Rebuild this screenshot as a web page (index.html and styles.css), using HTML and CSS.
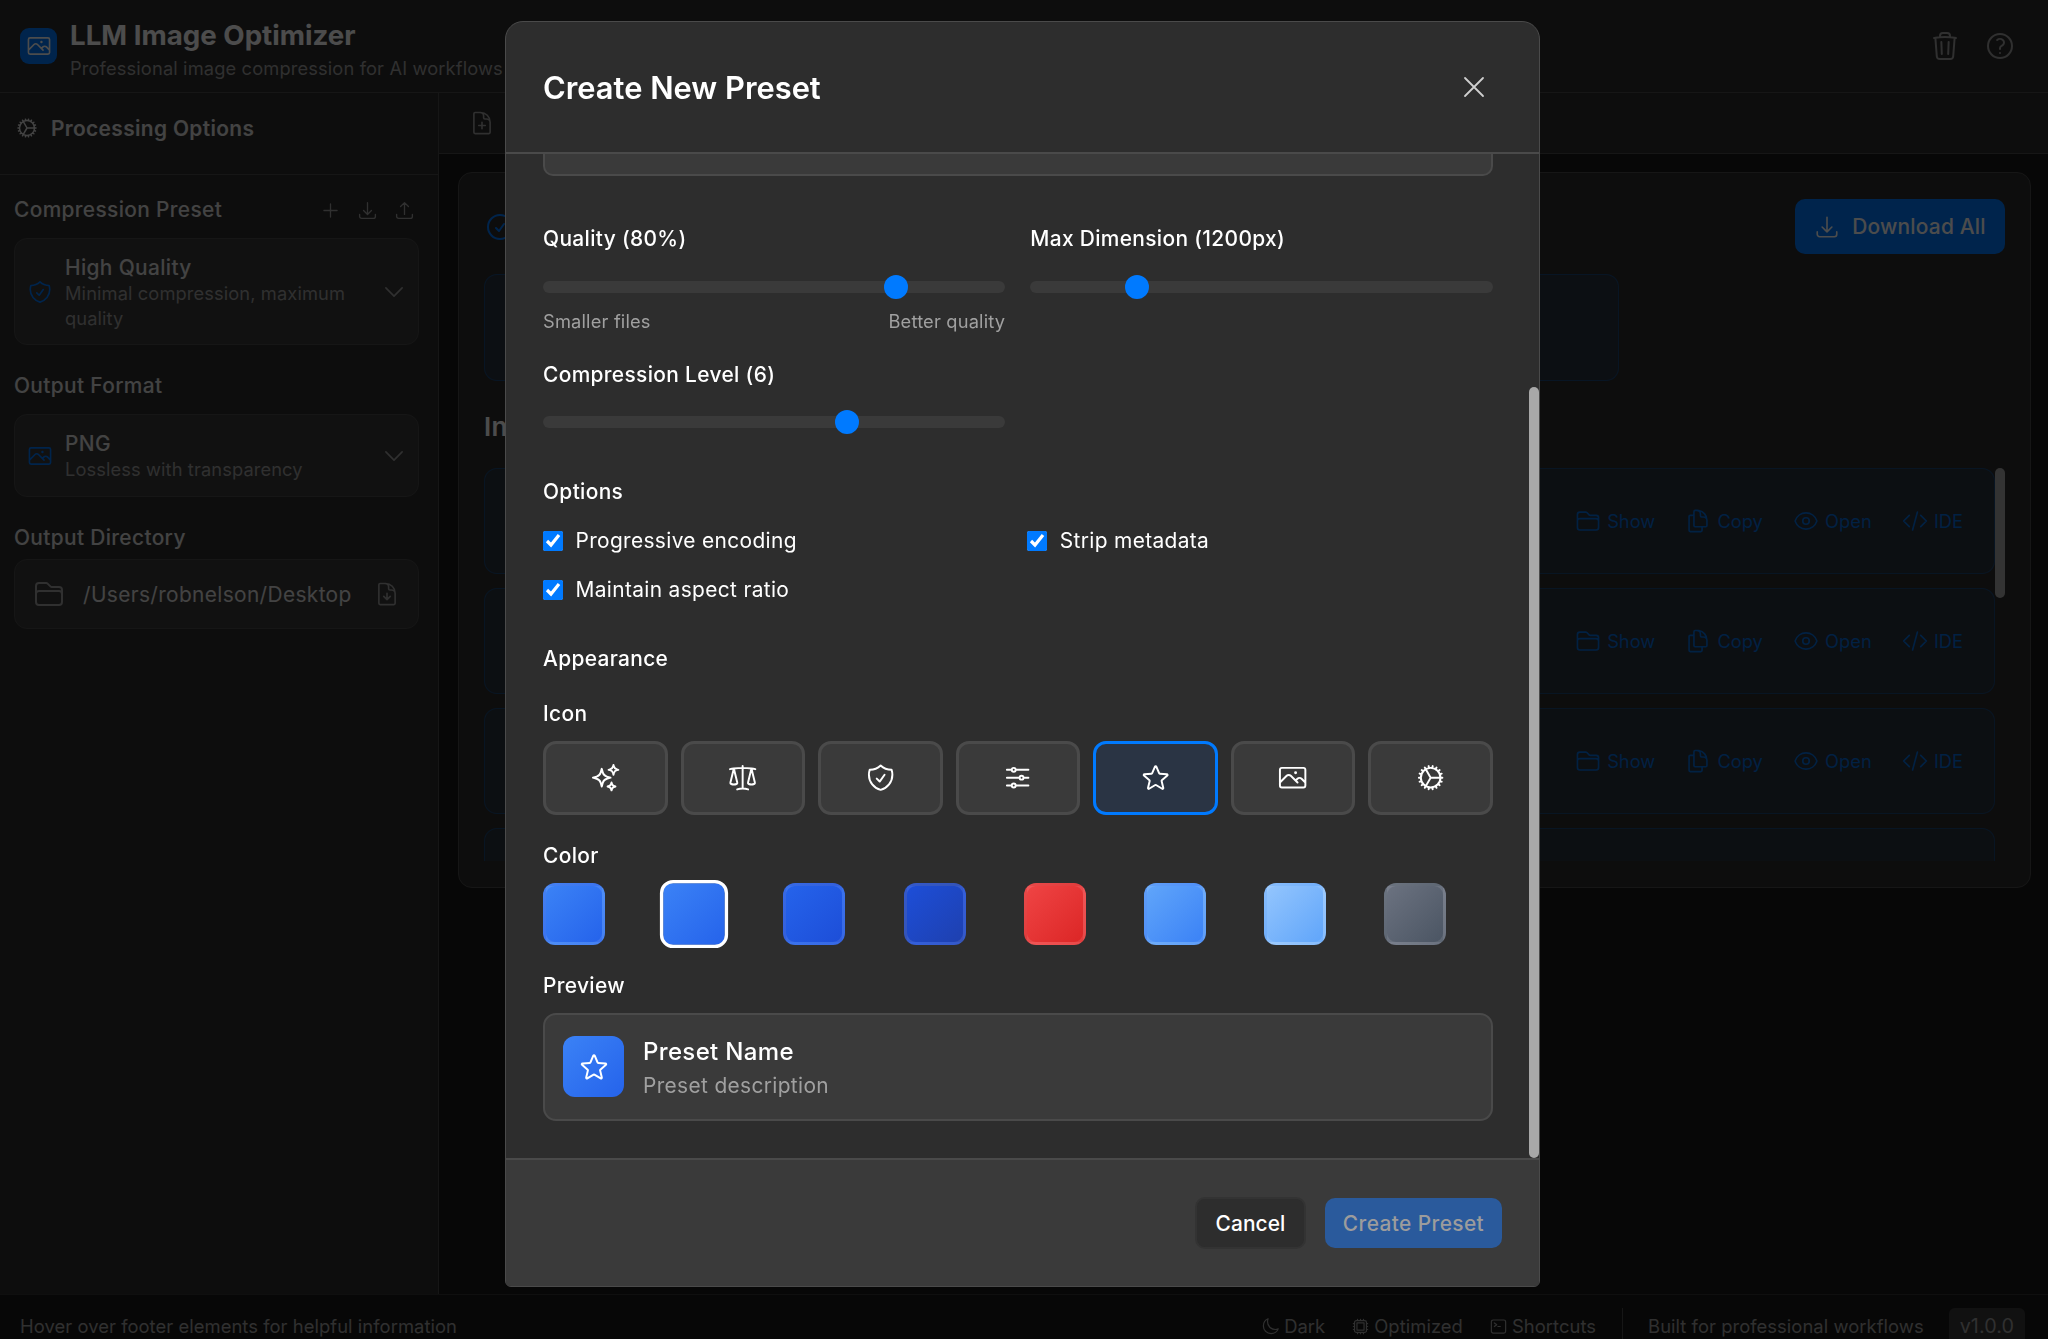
FILE: index.html
```html
<!DOCTYPE html>
<html lang="en">
<head>
<meta charset="utf-8">
<title>LLM Image Optimizer</title>
<link rel="stylesheet" href="styles.css">
</head>
<body>
<svg class="defs" aria-hidden="true">
  <symbol id="sparkles" viewBox="0 0 24 24"><path d="M9.813 15.904 9 18.75l-.813-2.846a4.5 4.5 0 0 0-3.09-3.09L2.25 12l2.846-.813a4.5 4.5 0 0 0 3.09-3.09L9 5.25l.813 2.846a4.5 4.5 0 0 0 3.09 3.09L15.75 12l-2.846.813a4.5 4.5 0 0 0-3.09 3.09ZM18.259 8.715 18 9.75l-.259-1.035a3.375 3.375 0 0 0-2.455-2.456L14.25 6l1.036-.259a3.375 3.375 0 0 0 2.455-2.456L18 2.25l.259 1.035a3.375 3.375 0 0 0 2.456 2.456L21.75 6l-1.035.259a3.375 3.375 0 0 0-2.456 2.456ZM16.894 20.567 16.5 21.75l-.394-1.183a2.25 2.25 0 0 0-1.423-1.423L13.5 18.75l1.183-.394a2.25 2.25 0 0 0 1.423-1.423l.394-1.183.394 1.183a2.25 2.25 0 0 0 1.423 1.423l1.183.394-1.183.394a2.25 2.25 0 0 0-1.423 1.423Z"/></symbol>
  <symbol id="scale" viewBox="0 0 24 24"><path d="M12 3v17.25m0 0c-1.472 0-2.882.265-4.185.75M12 20.25c1.472 0 2.882.265 4.185.75M18.75 4.97A48.416 48.416 0 0 0 12 4.5c-2.291 0-4.545.16-6.75.47m13.5 0c1.01.143 2.01.317 3 .52m-3-.52 2.62 10.726c.122.499-.106 1.028-.589 1.202a5.988 5.988 0 0 1-2.031.352 5.988 5.988 0 0 1-2.031-.352c-.483-.174-.711-.703-.59-1.202L18.75 4.971Zm-16.5.52c.99-.203 1.99-.377 3-.52m0 0 2.62 10.726c.122.499-.106 1.028-.589 1.202a5.989 5.989 0 0 1-2.031.352 5.989 5.989 0 0 1-2.031-.352c-.483-.174-.711-.703-.59-1.202L5.25 4.971Z"/></symbol>
  <symbol id="shield" viewBox="0 0 24 24"><path d="M9 12.75 11.25 15 15 9.75m-3-7.036A11.959 11.959 0 0 1 3.598 6 11.99 11.99 0 0 0 3 9.749c0 5.592 3.824 10.29 9 11.623 5.176-1.332 9-6.03 9-11.622 0-1.31-.21-2.571-.598-3.751h-.152c-3.196 0-6.1-1.248-8.25-3.285Z"/></symbol>
  <symbol id="sliders" viewBox="0 0 24 24"><path d="M10.5 6h9.75M10.5 6a1.5 1.5 0 1 1-3 0m3 0a1.5 1.5 0 1 0-3 0M3.75 6H7.5m3 12h9.75m-9.75 0a1.5 1.5 0 0 1-3 0m3 0a1.5 1.5 0 0 0-3 0m-3.75 0H7.5m9-6h3.75m-3.75 0a1.5 1.5 0 0 1-3 0m3 0a1.5 1.5 0 0 0-3 0m-9.75 0h9.75"/></symbol>
  <symbol id="star" viewBox="0 0 24 24"><path d="M11.48 3.499a.562.562 0 0 1 1.04 0l2.125 5.111a.563.563 0 0 0 .475.345l5.518.442c.499.04.701.663.321.988l-4.204 3.602a.563.563 0 0 0-.182.557l1.285 5.385a.562.562 0 0 1-.84.61l-4.725-2.885a.562.562 0 0 0-.586 0L6.982 20.54a.562.562 0 0 1-.84-.61l1.285-5.386a.562.562 0 0 0-.182-.557l-4.204-3.602a.562.562 0 0 1 .321-.988l5.518-.442a.563.563 0 0 0 .475-.345L11.48 3.5Z"/></symbol>
  <symbol id="photo" viewBox="0 0 24 24"><path d="m2.25 15.75 5.159-5.159a2.25 2.25 0 0 1 3.182 0l5.159 5.159m-1.5-1.5 1.409-1.409a2.25 2.25 0 0 1 3.182 0l2.909 2.909m-18 3.75h16.5a1.5 1.5 0 0 0 1.5-1.5V6a1.5 1.5 0 0 0-1.5-1.5H3.75A1.5 1.5 0 0 0 2.25 6v12a1.5 1.5 0 0 0 1.5 1.5Zm10.5-11.25h.008v.008h-.008V8.25Zm.375 0a.375.375 0 1 1-.75 0 .375.375 0 0 1 .75 0Z"/></symbol>
  <symbol id="cog" viewBox="0 0 24 24"><path d="M4.5 12a7.5 7.5 0 0 0 15 0m-15 0a7.5 7.5 0 1 1 15 0m-15 0H3m16.5 0H21m-1.5 0H12m-8.457 3.077 1.41-.513m14.095-5.13 1.41-.513M5.106 17.785l1.15-.964m11.49-9.642 1.149-.964M7.501 19.795l.75-1.3m7.5-12.99.75-1.3m-6.063 16.658.26-1.477m2.605-14.772.26-1.477m0 17.726-.26-1.477M10.698 4.614l-.26-1.477M16.5 19.794l-.75-1.299M7.5 4.205 12 12m6.894 5.785-1.149-.964M6.256 7.178l-1.15-.964m15.352 8.864-1.41-.513M4.954 9.435l-1.41-.514M12.002 12l-3.75 6.495"/></symbol>
  <symbol id="trash" viewBox="0 0 24 24"><path d="m14.74 9-.346 9m-4.788 0L9.26 9m9.968-3.21c.342.052.682.107 1.022.166m-1.022-.165L18.16 19.673a2.25 2.25 0 0 1-2.244 2.077H8.084a2.25 2.25 0 0 1-2.244-2.077L4.772 5.79m14.456 0a48.108 48.108 0 0 0-3.478-.397m-12 .562c.34-.059.68-.114 1.022-.165m0 0a48.11 48.11 0 0 1 3.478-.397m7.5 0v-.916c0-1.18-.91-2.164-2.09-2.201a51.964 51.964 0 0 0-3.32 0c-1.18.037-2.09 1.022-2.09 2.201v.916m7.5 0a48.667 48.667 0 0 0-7.5 0"/></symbol>
  <symbol id="question" viewBox="0 0 24 24"><path d="M9.879 7.519c1.171-1.025 3.071-1.025 4.242 0 1.172 1.025 1.172 2.687 0 3.712-.203.179-.43.326-.67.442-.745.361-1.45.999-1.45 1.827v.75M21 12a9 9 0 1 1-18 0 9 9 0 0 1 18 0Zm-9 5.25h.008v.008H12v-.008Z"/></symbol>
  <symbol id="tray-down" viewBox="0 0 24 24"><path d="M3 16.5v2.25A2.25 2.25 0 0 0 5.25 21h13.5A2.25 2.25 0 0 0 21 18.75V16.5M16.5 12 12 16.5m0 0L7.5 12m4.5 4.5V3"/></symbol>
  <symbol id="tray-up" viewBox="0 0 24 24"><path d="M3 16.5v2.25A2.25 2.25 0 0 0 5.25 21h13.5A2.25 2.25 0 0 0 21 18.75V16.5m-13.5-9L12 3m0 0 4.5 4.5M12 3v13.5"/></symbol>
  <symbol id="plus" viewBox="0 0 24 24"><path d="M12 4.5v15m7.5-7.5h-15"/></symbol>
  <symbol id="chevron" viewBox="0 0 24 24"><path d="m19.5 8.25-7.5 7.5-7.5-7.5"/></symbol>
  <symbol id="close" viewBox="0 0 24 24"><path d="M6 18 18 6M6 6l12 12"/></symbol>
  <symbol id="folder" viewBox="0 0 24 24"><path d="M2.25 12.75V12A2.25 2.25 0 0 1 4.5 9.75h15A2.25 2.25 0 0 1 21.75 12v.75m-8.69-6.44-2.12-2.12a1.5 1.5 0 0 0-1.061-.44H4.5A2.25 2.25 0 0 0 2.25 6v12a2.25 2.25 0 0 0 2.25 2.25h15A2.25 2.25 0 0 0 21.75 18V9a2.25 2.25 0 0 0-2.25-2.25h-5.379a1.5 1.5 0 0 1-1.06-.44Z"/></symbol>
  <symbol id="doc-down" viewBox="0 0 24 24"><path d="M19.5 14.25v-2.625a3.375 3.375 0 0 0-3.375-3.375h-1.5A1.125 1.125 0 0 1 13.5 7.125v-1.5a3.375 3.375 0 0 0-3.375-3.375H8.25m.75 12 3 3m0 0 3-3m-3 3v-6m-1.5-9H5.625c-.621 0-1.125.504-1.125 1.125v17.25c0 .621.504 1.125 1.125 1.125h12.75c.621 0 1.125-.504 1.125-1.125V11.25a9 9 0 0 0-9-9Z"/></symbol>
  <symbol id="doc-plus" viewBox="0 0 24 24"><path d="M19.5 14.25v-2.625a3.375 3.375 0 0 0-3.375-3.375h-1.5A1.125 1.125 0 0 1 13.5 7.125v-1.5a3.375 3.375 0 0 0-3.375-3.375H8.25m3.75 9v6m3-3H9m1.5-12H5.625c-.621 0-1.125.504-1.125 1.125v17.25c0 .621.504 1.125 1.125 1.125h12.75c.621 0 1.125-.504 1.125-1.125V11.25a9 9 0 0 0-9-9Z"/></symbol>
  <symbol id="check-circle" viewBox="0 0 24 24"><path d="M9 12.75 11.25 15 15 9.75M21 12a9 9 0 1 1-18 0 9 9 0 0 1 18 0Z"/></symbol>
  <symbol id="eye" viewBox="0 0 24 24"><path d="M2.036 12.322a1.012 1.012 0 0 1 0-.639C3.423 7.51 7.36 4.5 12 4.5c4.638 0 8.573 3.007 9.963 7.178.07.207.07.431 0 .639C20.577 16.49 16.64 19.5 12 19.5c-4.638 0-8.573-3.007-9.963-7.178Z"/><path d="M15 12a3 3 0 1 1-6 0 3 3 0 0 1 6 0Z"/></symbol>
  <symbol id="copy" viewBox="0 0 24 24"><path d="M15.75 17.25v3.375c0 .621-.504 1.125-1.125 1.125h-9.75a1.125 1.125 0 0 1-1.125-1.125V7.875c0-.621.504-1.125 1.125-1.125H6.75a9.06 9.06 0 0 1 1.5.124m7.5 10.376h3.375c.621 0 1.125-.504 1.125-1.125V11.25c0-4.46-3.243-8.161-7.5-8.876a9.06 9.06 0 0 0-1.5-.124H9.375c-.621 0-1.125.504-1.125 1.125v3.5m7.5 10.375H9.375a1.125 1.125 0 0 1-1.125-1.125v-9.25m12 6.625v-1.875a3.375 3.375 0 0 0-3.375-3.375h-1.5a1.125 1.125 0 0 1-1.125-1.125v-1.5a3.375 3.375 0 0 0-3.375-3.375H9.75"/></symbol>
  <symbol id="code" viewBox="0 0 24 24"><path d="M17.25 6.75 22.5 12l-5.25 5.25m-10.5 0L1.5 12l5.25-5.25m7.5-3-4.5 16.5"/></symbol>
  <symbol id="moon" viewBox="0 0 24 24"><path d="M21.752 15.002A9.72 9.72 0 0 1 18 15.75c-5.385 0-9.75-4.365-9.75-9.75 0-1.33.266-2.597.748-3.752A9.753 9.753 0 0 0 3 11.25C3 16.635 7.365 21 12.75 21a9.753 9.753 0 0 0 9.002-5.998Z"/></symbol>
  <symbol id="chip" viewBox="0 0 24 24"><path d="M8.25 3v1.5M4.5 8.25H3m18 0h-1.5M4.5 12H3m18 0h-1.5m-15 3.75H3m18 0h-1.5M8.25 19.5V21M12 3v1.5m0 15V21m3.75-18v1.5m0 15V21m-9-1.5h10.5a2.25 2.25 0 0 0 2.25-2.25V6.75a2.25 2.25 0 0 0-2.25-2.25H6.75A2.25 2.25 0 0 0 4.5 6.75v10.5a2.25 2.25 0 0 0 2.25 2.25Zm.75-12h9v9h-9v-9Z"/></symbol>
  <symbol id="terminal" viewBox="0 0 24 24"><path d="m6.75 7.5 3 2.25-3 2.25m4.5 0h3m-9 8.25h13.5A2.25 2.25 0 0 0 21 18V6a2.25 2.25 0 0 0-2.25-2.25H5.25A2.25 2.25 0 0 0 3 6v12a2.25 2.25 0 0 0 2.25 2.25Z"/></symbol>
</svg>

<header class="app-header">
  <div class="brand">
    <div class="logo"><svg class="ic ic-26"><use href="#photo"/></svg></div>
    <div class="brand-text">
      <div class="brand-title">LLM Image Optimizer</div>
      <div class="brand-sub">Professional image compression for AI workflows</div>
    </div>
  </div>
  <div class="header-tools">
    <svg class="ic ic-32"><use href="#trash"/></svg>
    <svg class="ic ic-32"><use href="#question"/></svg>
  </div>
</header>

<div class="workspace">
  <aside class="sidebar">
    <div class="side-head">
      <svg class="ic ic-24"><use href="#cog"/></svg>
      <span>Processing Options</span>
    </div>
    <div class="side-body">
      <div class="side-label side-label-first">
        <span>Compression Preset</span>
        <span class="preset-tools">
          <svg class="ic ic-21"><use href="#plus"/></svg>
          <svg class="ic ic-21"><use href="#tray-down"/></svg>
          <svg class="ic ic-21"><use href="#tray-up"/></svg>
        </span>
      </div>
      <div class="select-card select-tall">
        <svg class="ic ic-26 blue"><use href="#shield"/></svg>
        <div class="select-text">
          <div class="select-name">High Quality</div>
          <div class="select-desc">Minimal compression, maximum quality</div>
        </div>
        <svg class="ic ic-26 muted"><use href="#chevron"/></svg>
      </div>
      <div class="side-label">Output Format</div>
      <div class="select-card select-mid">
        <svg class="ic ic-26 blue"><use href="#photo"/></svg>
        <div class="select-text">
          <div class="select-name">PNG</div>
          <div class="select-desc">Lossless with transparency</div>
        </div>
        <svg class="ic ic-26 muted"><use href="#chevron"/></svg>
      </div>
      <div class="side-label side-label-dir">Output Directory</div>
      <div class="dir-card">
        <svg class="ic ic-32 muted"><use href="#folder"/></svg>
        <span class="dir-path">/Users/robnelson/Desktop</span>
        <svg class="ic ic-26 muted"><use href="#doc-down"/></svg>
      </div>
    </div>
  </aside>

  <main class="main">
    <div class="tabbar"><svg class="ic ic-26 muted"><use href="#doc-plus"/></svg></div>
    <div class="content">
      <section class="results">
        <div class="results-head">
          <svg class="ic ic-32 blue"><use href="#check-circle"/></svg>
          <button class="download-all"><svg class="ic ic-26"><use href="#tray-down"/></svg>Download All</button>
        </div>
        <div class="stats"></div>
        <h2 class="results-title">Individual Files</h2>
        <div class="file-list">
          <div class="file-row">
            <span class="act"><svg class="ic ic-26"><use href="#folder"/></svg>Show</span>
            <span class="act"><svg class="ic ic-26"><use href="#copy"/></svg>Copy</span>
            <span class="act"><svg class="ic ic-26"><use href="#eye"/></svg>Open</span>
            <span class="act"><svg class="ic ic-26"><use href="#code"/></svg>IDE</span>
          </div>
          <div class="file-row">
            <span class="act"><svg class="ic ic-26"><use href="#folder"/></svg>Show</span>
            <span class="act"><svg class="ic ic-26"><use href="#copy"/></svg>Copy</span>
            <span class="act"><svg class="ic ic-26"><use href="#eye"/></svg>Open</span>
            <span class="act"><svg class="ic ic-26"><use href="#code"/></svg>IDE</span>
          </div>
          <div class="file-row">
            <span class="act"><svg class="ic ic-26"><use href="#folder"/></svg>Show</span>
            <span class="act"><svg class="ic ic-26"><use href="#copy"/></svg>Copy</span>
            <span class="act"><svg class="ic ic-26"><use href="#eye"/></svg>Open</span>
            <span class="act"><svg class="ic ic-26"><use href="#code"/></svg>IDE</span>
          </div>
          <div class="file-row"></div>
          <div class="list-thumb"></div>
        </div>
      </section>
    </div>
  </main>
</div>

<footer class="app-footer">
  <span class="foot-hint">Hover over footer elements for helpful information</span>
  <div class="foot-right">
    <span class="foot-item"><svg class="ic ic-19"><use href="#moon"/></svg>Dark</span>
    <span class="foot-item"><svg class="ic ic-19"><use href="#chip"/></svg>Optimized</span>
    <span class="foot-item"><svg class="ic ic-19"><use href="#terminal"/></svg>Shortcuts</span>
    <span class="foot-div"></span>
    <span class="foot-built">Built for professional workflows</span>
    <span class="foot-ver">v1.0.0</span>
  </div>
</footer>

<div class="overlay">
  <div class="modal">
    <div class="modal-head">
      <h1 class="modal-title">Create New Preset</h1>
      <svg class="ic ic-close"><use href="#close"/></svg>
    </div>
    <div class="modal-body">
      <div class="scroll-thumb"></div>
      <div class="peek-field"></div>
      <div class="slider-grid">
        <div>
          <label class="field-label">Quality (80%)</label>
          <input class="range" type="range" min="10" max="100" value="80">
          <div class="hints"><span>Smaller files</span><span>Better quality</span></div>
        </div>
        <div>
          <label class="field-label">Max Dimension (1200px)</label>
          <input class="range" type="range" min="400" max="4096" value="1200">
        </div>
        <div class="slider-third">
          <label class="field-label">Compression Level (6)</label>
          <input class="range" type="range" min="0" max="9" value="6">
        </div>
      </div>
      <div class="field-label group-options">Options</div>
      <div class="check-grid">
        <label class="check"><input type="checkbox" checked>Progressive encoding</label>
        <label class="check"><input type="checkbox" checked>Strip metadata</label>
        <label class="check"><input type="checkbox" checked>Maintain aspect ratio</label>
      </div>
      <div class="field-label group-appearance">Appearance</div>
      <div class="field-label group-icon">Icon</div>
      <div class="icon-grid">
        <button class="icon-btn"><svg class="ic ic-31"><use href="#sparkles"/></svg></button>
        <button class="icon-btn"><svg class="ic ic-31"><use href="#scale"/></svg></button>
        <button class="icon-btn"><svg class="ic ic-31"><use href="#shield"/></svg></button>
        <button class="icon-btn"><svg class="ic ic-31"><use href="#sliders"/></svg></button>
        <button class="icon-btn is-active"><svg class="ic ic-31"><use href="#star"/></svg></button>
        <button class="icon-btn"><svg class="ic ic-31"><use href="#photo"/></svg></button>
        <button class="icon-btn"><svg class="ic ic-31"><use href="#cog"/></svg></button>
      </div>
      <div class="field-label group-color">Color</div>
      <div class="color-grid">
        <span class="swatch sw-1"></span>
        <span class="swatch sw-1 is-picked"></span>
        <span class="swatch sw-2"></span>
        <span class="swatch sw-3"></span>
        <span class="swatch sw-4"></span>
        <span class="swatch sw-5"></span>
        <span class="swatch sw-6"></span>
        <span class="swatch sw-7"></span>
      </div>
      <div class="field-label group-preview">Preview</div>
      <div class="preview">
        <div class="preview-icon"><svg class="ic ic-32"><use href="#star"/></svg></div>
        <div class="preview-text">
          <div class="preview-name">Preset Name</div>
          <div class="preview-desc">Preset description</div>
        </div>
      </div>
    </div>
    <div class="modal-foot">
      <button class="btn btn-cancel">Cancel</button>
      <button class="btn btn-create">Create Preset</button>
    </div>
  </div>
</div>
</body>
</html>
```

FILE: styles.css
```css
* { box-sizing: border-box; }
html, body { margin: 0; height: 100%; }
body {
  height: 1339px;
  overflow: hidden;
  display: flex;
  flex-direction: column;
  background: #1a1a1a;
  color: #fff;
  font-family: Inter, "Liberation Sans", sans-serif;
  font-size: 20.9px;
  letter-spacing: .35px;
}
.defs { display: none; }
.ic { fill: none; stroke: currentColor; stroke-width: 1.5; stroke-linecap: round; stroke-linejoin: round; flex: none; display: block; }
.ic-19 { width: 19px; height: 19px; }
.ic-21 { width: 21px; height: 21px; }
.ic-24 { width: 24px; height: 24px; }
.ic-26 { width: 26px; height: 26px; }
.ic-31 { width: 31.3px; height: 31.3px; }
.ic-32 { width: 32px; height: 32px; }
.ic-close { width: 36px; height: 36px; stroke-width: 1.2; color: #cfcfcf; }
.blue { color: #007aff; }
.muted { color: #a0a0a0; }

/* App header */
.app-header {
  height: 93px;
  flex: none;
  display: flex;
  align-items: center;
  justify-content: space-between;
  padding: 0 32px 0 20px;
  background: #2d2d2d;
  border-bottom: 1px solid #4a4a4a;
}
.brand { display: flex; align-items: center; gap: 13px; }
.brand-text { padding-top: 4px; }
.logo {
  width: 37px; height: 36px;
  border-radius: 9px;
  background: #007aff;
  display: flex; align-items: center; justify-content: center;
}
.brand-title { font-size: 27.7px; font-weight: 700; line-height: 36px; letter-spacing: 0; }
.brand-sub { font-size: 18.3px; line-height: 24px; margin-top: 3px; color: #a0a0a0; letter-spacing: .13px; }
.header-tools { display: flex; gap: 23px; color: #a0a0a0; }

.workspace { flex: 1; min-height: 0; display: flex; }

/* Sidebar */
.sidebar { width: 439px; flex: none; background: #2d2d2d; border-right: 1px solid #4a4a4a; }
.side-head {
  height: 82px;
  display: flex; align-items: center; gap: 12px;
  padding: 0 0 11px 15px;
  border-bottom: 1px solid #4a4a4a;
  font-weight: 600;
  color: #e0e0e0;
}
.side-body { padding: 0 19px 0 14px; }
.side-label { color: #e0e0e0; font-weight: 500; line-height: 26px; margin: 28px 0 15px; }
.side-label-first { margin: 22px 0 15px; display: flex; justify-content: space-between; align-items: center; }
.side-label-dir { margin-bottom: 8px; }
.preset-tools { display: flex; gap: 16px; color: #a0a0a0; padding-right: 4px; }
.select-card, .dir-card {
  display: flex; align-items: center;
  background: #3a3a3a;
  border: 1px solid #4a4a4a;
  border-radius: 13px;
}
.select-card { padding: 0 11px 0 12px; gap: 12px; }
.select-tall { height: 107px; }
.select-mid { height: 83px; }
.select-text { flex: 1; min-width: 0; padding-top: 2px; }
.select-name { font-weight: 500; line-height: 26px; color: #e0e0e0; }
.select-desc { font-size: 18.3px; line-height: 25px; color: #a0a0a0; letter-spacing: .1px; }
.dir-card { height: 70px; padding: 0 18px; }
.dir-path { flex: 1; margin-left: 18px; color: #e0e0e0; white-space: nowrap; }

/* Main */
.main { flex: 1; min-width: 0; display: flex; flex-direction: column; }
.tabbar {
  height: 60.5px; flex: none;
  display: flex; align-items: center;
  padding-left: 30px;
  background: #2d2d2d;
  border-bottom: 1px solid #4a4a4a;
}
.content { padding: 18.5px 17px 0 19px; }
.results {
  height: 716px;
  background: #2d2d2d;
  border: 1px solid #4a4a4a;
  border-radius: 14px;
  padding: 26px 25px 0 25px;
}
.results-head { display: flex; justify-content: space-between; align-items: center; }
.download-all {
  width: 210px; height: 55px;
  display: flex; align-items: center; justify-content: center; gap: 12px;
  border: 0; border-radius: 10px;
  background: #007aff; color: #fff;
  font: 500 20.9px Inter, sans-serif;
  letter-spacing: .2px;
}
.stats {
  width: 1135px; height: 107px;
  margin-top: 20px;
  border: 1px solid rgba(0,122,255,.3);
  border-radius: 13px;
  background: rgba(0,122,255,.1);
}
.results-title { margin: 30px 0 25px; font-size: 26px; line-height: 32px; font-weight: 600; }
.file-list {
  position: relative;
  height: 393px;
  overflow: hidden;
  padding-right: 10px;
  display: flex; flex-direction: column; gap: 14px;
}
.file-row {
  height: 106px; flex: none;
  display: flex; align-items: center; justify-content: flex-end; gap: 30.2px;
  padding-right: 31px;
  border: 1px solid rgba(0,122,255,.3);
  border-radius: 13px;
  background: rgba(0,122,255,.08);
}
.act { display: flex; align-items: center; gap: 6px; font-size: 18.3px; letter-spacing: 0; color: rgba(0,122,255,.85); }
.list-thumb { position: absolute; top: 0; right: 0; width: 10px; height: 130px; border-radius: 5px; background: #aaa; }

/* Footer */
.app-footer {
  height: 45px; flex: none;
  display: flex; justify-content: space-between; align-items: flex-end;
  padding: 0 23px 0 20px;
  background: #1a1a1a;
  border-top: 1px solid #333;
  font-size: 18.4px;
  letter-spacing: .05px;
  line-height: 26px;
  color: #a0a0a0;
}
.foot-right { display: flex; align-items: flex-end; }
.foot-item { display: flex; align-items: center; gap: 4px; margin-right: 26px; }
.foot-div { width: 1px; height: 31px; background: #4a4a4a; }
.foot-built { margin: 0 25px; }
.foot-ver { height: 31px; line-height: 36px; padding: 0 11px; background: #3a3a3a; border-radius: 6px 6px 0 0; font-size: 19.8px; }

/* Overlay and modal */
.overlay {
  position: fixed; inset: 0;
  background: rgba(0,0,0,.7);
  padding: 21px 0 0 505px;
}
.modal {
  width: 1035px; height: 1266px;
  display: flex; flex-direction: column;
  background: #2d2d2d;
  border: 1px solid #4a4a4a;
  border-radius: 18px 18px 6px 6px;
  overflow: hidden;
}
.modal-head {
  height: 132px; flex: none;
  display: flex; align-items: center; justify-content: space-between;
  padding: 0 47px 0 37px;
  border-bottom: 2px solid #4a4a4a;
}
.modal-title { margin: 0; font-size: 30.85px; font-weight: 600; letter-spacing: 0; }
.modal-body {
  position: relative;
  flex: 1; min-height: 0;
  overflow: hidden;
  padding: 0 46.5px 0 37px;
}
.scroll-thumb {
  position: absolute; top: 233px; bottom: 0; right: 0;
  width: 10px;
  background: #a8a8a8;
  border-radius: 5px;
}
.peek-field {
  height: 21.5px;
  background: #3a3a3a;
  border: 2px solid #4a4a4a;
  border-top: 0;
  border-radius: 0 0 10px 10px;
}
.field-label { display: block; font-weight: 500; line-height: 26px; }
.slider-grid { display: grid; grid-template-columns: 1fr 1fr; column-gap: 25px; margin-top: 50.5px; }
.slider-third { margin-top: 30px; }
.range {
  display: block;
  appearance: none;
  -webkit-appearance: none;
  width: 100%; height: 24px;
  margin: 23px 0 0;
  background: transparent;
}
.slider-third .range { margin-top: 22px; }
.range::-webkit-slider-runnable-track { height: 12px; border-radius: 6px; background: #3a3a3a; }
.range::-webkit-slider-thumb {
  -webkit-appearance: none;
  width: 24px; height: 24px;
  margin-top: -6px;
  border-radius: 50%;
  background: #007aff;
}
.hints { display: flex; justify-content: space-between; margin-top: 10.5px; font-size: 18.3px; line-height: 22px; letter-spacing: .17px; color: #a0a0a0; }
.group-options { margin-top: 45.5px; }
.check-grid { display: grid; grid-template-columns: 1fr 1fr; column-gap: 19px; row-gap: 23px; margin-top: 23px; }
.check { display: flex; align-items: center; gap: 12.5px; line-height: 26px; }
.check input { width: 20px; height: 20px; margin: 0; accent-color: #007aff; }
.group-appearance { margin-top: 43px; }
.group-icon { margin-top: 29px; }
.icon-grid { display: grid; grid-template-columns: repeat(7, 1fr); gap: 13px; margin-top: 14px; }
.icon-btn {
  height: 74px;
  display: flex; align-items: center; justify-content: center;
  background: #3a3a3a;
  border: 3px solid #4a4a4a;
  border-radius: 13px;
  color: #fff;
  padding: 0;
}
.icon-btn.is-active { background: #2a3444; border-color: #007aff; }
.group-color { margin-top: 28px; }
.color-grid { display: grid; grid-template-columns: repeat(8, 1fr); gap: 12px; margin-top: 14px; }
.swatch { width: 62px; height: 62px; border-radius: 12px; border: 3px solid rgba(255,255,255,.1); }
.swatch.is-picked { border-color: #fff; transform: scale(1.1); }
.sw-1 { background: linear-gradient(135deg, #3b82f6, #2563eb); }
.sw-2 { background: linear-gradient(135deg, #2563eb, #1d4ed8); }
.sw-3 { background: linear-gradient(135deg, #1d4ed8, #1e40af); }
.sw-4 { background: linear-gradient(135deg, #ef4444, #dc2626); }
.sw-5 { background: linear-gradient(135deg, #60a5fa, #3b82f6); }
.sw-6 { background: linear-gradient(135deg, #93c5fd, #60a5fa); }
.sw-7 { background: linear-gradient(135deg, #6b7280, #4b5563); }
.group-preview { margin-top: 28px; }
.preview {
  height: 108px;
  margin-top: 13.5px;
  display: flex; align-items: center; gap: 19px;
  padding-left: 18px;
  background: #3a3a3a;
  border: 2px solid #4a4a4a;
  border-radius: 13px;
}
.preview-icon {
  width: 61px; height: 61px;
  display: flex; align-items: center; justify-content: center;
  border-radius: 12px;
  background: linear-gradient(135deg, #3b82f6, #2563eb);
}
.preview-text { padding-top: 2px; }
.preview-name { font-size: 24px; font-weight: 500; line-height: 32px; }
.preview-desc { line-height: 26px; margin-top: 5px; color: #a0a0a0; }
.modal-foot {
  height: 128px; flex: none;
  display: flex; align-items: center; justify-content: flex-end; gap: 19px;
  padding-right: 37px;
  background: #3a3a3a;
  border-top: 2px solid #4a4a4a;
}
.btn { font: 500 20.9px Inter, sans-serif; border-radius: 10px; }
.btn-cancel { width: 111px; height: 52px; background: #2d2d2d; border: 2px solid #333; color: #fff; padding: 0; letter-spacing: .1px; }
.btn-create { width: 177px; height: 50px; background: #2a5a9c; border: 0; color: #9c9c9c; padding: 0; letter-spacing: .4px; }
```
